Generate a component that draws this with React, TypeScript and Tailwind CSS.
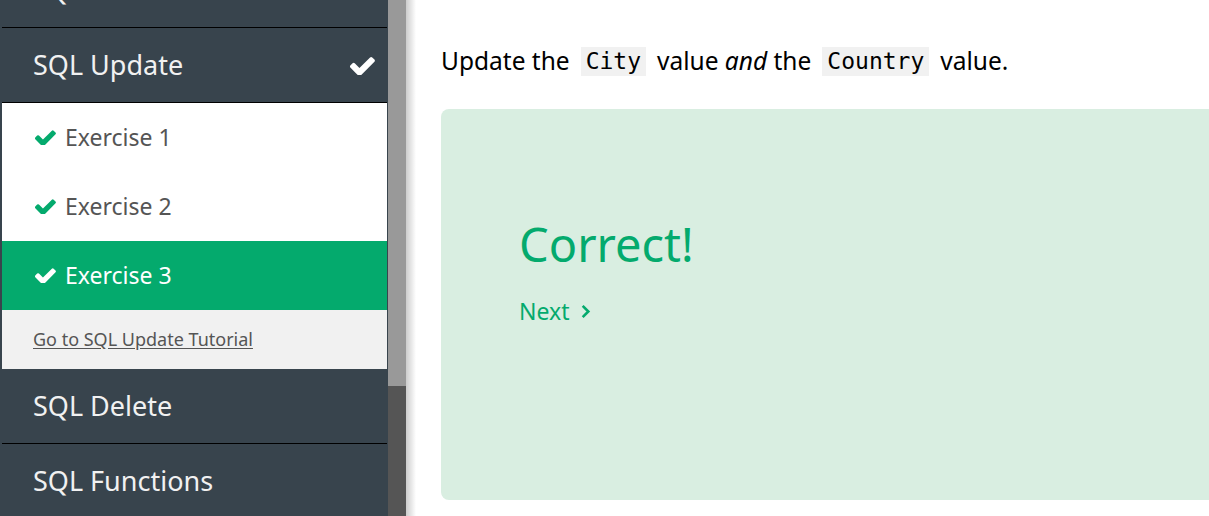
const font = { fontFamily: '"Segoe UI", "Noto Sans", "Open Sans", sans-serif' };
const mono = { fontFamily: '"DejaVu Sans Mono", monospace' };

function Check({ className }: { className?: string }) {
  return (
    <svg viewBox="128 360 1550 1010" className={className} fill="currentColor">
      <path d="M1671 566q0 40-28 68l-724 724-136 136q-28 28-68 28t-68-28l-136-136-362-362q-28-28-28-68t28-68l136-136q28-28 68-28t68 28l294 295 656-657q28-28 68-28t68 28l136 136q28 28 28 68z" />
    </svg>
  );
}

function Topic({ title, done }: { title: string; done?: boolean }) {
  return (
    <div className="flex h-[74px] items-center justify-between pl-[31px] pr-[12px] text-[27px] text-[#f1f1f1]">
      <span>{title}</span>
      {done && <Check className="w-[25px] h-[19px] text-white" />}
    </div>
  );
}

function Exercise({ n, active }: { n: number; active?: boolean }) {
  return (
    <div
      className={
        'flex h-[69px] items-center gap-[9px] pl-[33px] text-[23px] ' +
        (active ? 'bg-[#04aa6d] text-white' : 'bg-white text-[#555]')
      }
    >
      <Check className={'w-[21px] h-[15px] ' + (active ? 'text-white' : 'text-[#04aa6d]')} />
      <span>Exercise {n}</span>
    </div>
  );
}

export default function App() {
  return (
    <div className="flex h-[516px] w-[1209px] overflow-hidden bg-white" style={font}>
      <div className="w-[388px] shrink-0 overflow-hidden bg-[#38444d] pl-[2px] pr-[1px]">
        <div className="-mt-[47px]">
          <Topic title="SQL Null Values" />
        </div>
        <div className="h-px bg-black" />
        <Topic title="SQL Update" done />
        <div className="h-px bg-black" />
        <Exercise n={1} />
        <Exercise n={2} />
        <Exercise n={3} active />
        <div className="flex h-[59px] items-center bg-[#f1f1f1] pl-[31px] text-[18px] text-[#555]">
          <a href="#" className="underline underline-offset-2">Go to SQL Update Tutorial</a>
        </div>
        <Topic title="SQL Delete" />
        <div className="h-px bg-black" />
        <Topic title="SQL Functions" />
      </div>
      <div className="flex w-[18px] shrink-0 flex-col bg-[#555]">
        <div className="h-[386px] bg-[#999]" />
      </div>
      <div className="relative flex-1 pl-[35px] pt-[46px]">
        <div className="pointer-events-none absolute inset-y-0 left-0 w-[10px] bg-gradient-to-r from-black/20 to-transparent" />
        <p className="flex h-[30px] items-center gap-[11px] whitespace-pre text-[24.5px] text-black">
          <span>Update the</span>
          <code className="flex h-[29px] items-center bg-[#f1f1f1] px-[5px] text-[23px]" style={mono}>City</code>
          <span>
            value <i>and</i> the
          </span>
          <code className="flex h-[29px] items-center bg-[#f1f1f1] px-[5px] text-[23px]" style={mono}>Country</code>
          <span>value.</span>
        </p>
        <div className="mt-[33px] h-[391px] w-[900px] rounded-[8px] bg-[#d9eee1] pl-[78px] pt-[105px]">
          <div className="text-[47px] leading-[60px] text-[#04aa6d]">Correct!</div>
          <div className="mt-[20px] flex items-center gap-[11px] text-[23px] text-[#04aa6d]">
            Next
            <svg viewBox="0 0 11 16" className="w-[11px] h-[15px]" fill="none" stroke="currentColor" strokeWidth="2.8">
              <path d="M2.5 2l6 6-6 6" />
            </svg>
          </div>
        </div>
      </div>
    </div>
  );
}
